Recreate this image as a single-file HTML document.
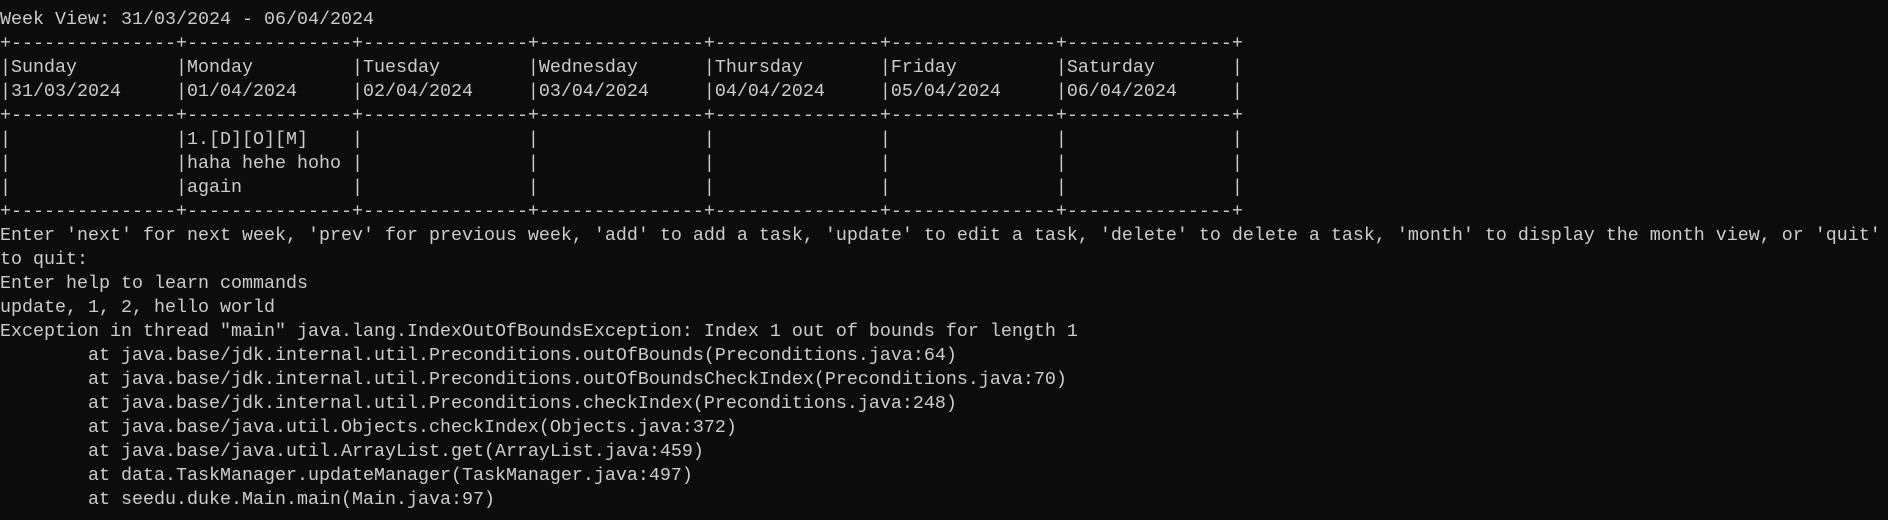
<!DOCTYPE html>
<html><head><meta charset="utf-8"><style>
html,body{margin:0;padding:0;background:#0c0c0c;width:1888px;height:520px;overflow:hidden}
pre{margin:0;padding:8px 0 0 0;color:#cccccc;font-family:"Liberation Mono",monospace;font-size:18.33px;line-height:24px;white-space:pre}
</style></head><body><pre>Week View: 31/03/2024 - 06/04/2024
+---------------+---------------+---------------+---------------+---------------+---------------+---------------+
|Sunday         |Monday         |Tuesday        |Wednesday      |Thursday       |Friday         |Saturday       |
|31/03/2024     |01/04/2024     |02/04/2024     |03/04/2024     |04/04/2024     |05/04/2024     |06/04/2024     |
+---------------+---------------+---------------+---------------+---------------+---------------+---------------+
|               |1.[D][O][M]    |               |               |               |               |               |
|               |haha hehe hoho |               |               |               |               |               |
|               |again          |               |               |               |               |               |
+---------------+---------------+---------------+---------------+---------------+---------------+---------------+
Enter 'next' for next week, 'prev' for previous week, 'add' to add a task, 'update' to edit a task, 'delete' to delete a task, 'month' to display the month view, or 'quit'
to quit:
Enter help to learn commands
update, 1, 2, hello world
Exception in thread "main" java.lang.IndexOutOfBoundsException: Index 1 out of bounds for length 1
        at java.base/jdk.internal.util.Preconditions.outOfBounds(Preconditions.java:64)
        at java.base/jdk.internal.util.Preconditions.outOfBoundsCheckIndex(Preconditions.java:70)
        at java.base/jdk.internal.util.Preconditions.checkIndex(Preconditions.java:248)
        at java.base/java.util.Objects.checkIndex(Objects.java:372)
        at java.base/java.util.ArrayList.get(ArrayList.java:459)
        at data.TaskManager.updateManager(TaskManager.java:497)
        at seedu.duke.Main.main(Main.java:97)</pre></body></html>
